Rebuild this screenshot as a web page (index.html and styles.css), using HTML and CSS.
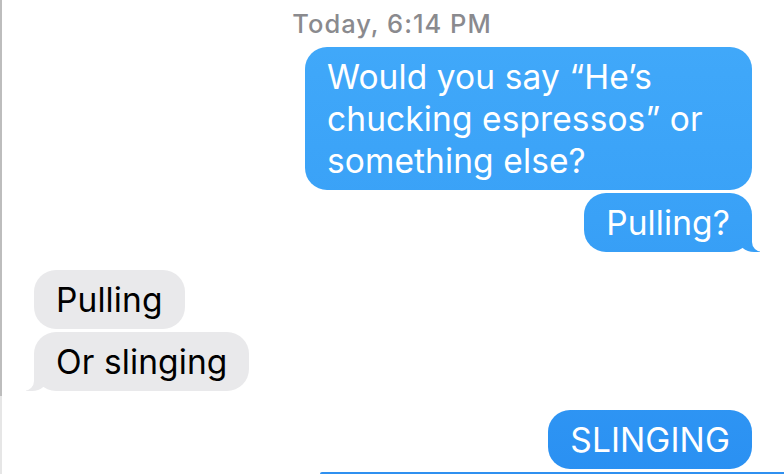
FILE: index.html
```html
<!DOCTYPE html>
<html lang="en">
<head>
<meta charset="utf-8">
<title>Messages</title>
<link rel="stylesheet" href="styles.css">
</head>
<body>
<div class="screen">
  <div class="edge"></div>
  <main class="thread">
    <div class="stamp">Today, 6:14 PM</div>
    <div class="group sent">
      <div class="bubble blue wide">Would you say “He’s chucking espressos” or something else?</div>
      <div class="bubble blue tail">Pulling?</div>
    </div>
    <div class="group recv">
      <div class="bubble gray">Pulling</div>
      <div class="bubble gray tail">Or slinging</div>
    </div>
    <div class="group sent after-recv">
      <div class="bubble blue">SLINGING</div>
    </div>
    <div class="next"></div>
  </main>
</div>
</body>
</html>
```
FILE: styles.css
```css
html, body {
  margin: 0;
  padding: 0;
  background: #fff;
}
.screen {
  width: 784px;
  height: 474px;
  overflow: hidden;
  display: flex;
  font-family: Inter, "Liberation Sans", sans-serif;
}
.edge {
  width: 2px;
  flex: none;
  background: linear-gradient(to bottom, #bdbdbd 0, #bdbdbd 396px, #e6e6e6 396px, #e6e6e6 100%);
}
.thread {
  flex: 1;
  display: flex;
  flex-direction: column;
}
.stamp {
  height: 47px;
  flex: none;
  box-sizing: border-box;
  padding-top: 8px;
  text-align: center;
  color: #8a8a8e;
  font-size: 25.5px;
  font-weight: 500;
  line-height: 31px;
  letter-spacing: 1px;
  padding-right: 2px;
}
.group {
  display: flex;
  flex-direction: column;
  gap: 3px;
  flex: none;
}
.sent {
  align-items: flex-end;
  padding-right: 32px;
}
.recv {
  align-items: flex-start;
  padding-left: 32px;
  margin-top: 18px;
}
.after-recv {
  margin-top: 19px;
}
.bubble {
  position: relative;
  box-sizing: border-box;
  font-size: 33.5px;
  line-height: 42px;
  padding: 9px 22px 8px 22px;
  border-radius: 22px;
  letter-spacing: 0.1px;
}
.wide {
  max-width: 447px;
  width: 447px;
  padding-bottom: 8px;
}
.blue {
  color: #fff;
  background: linear-gradient(to bottom, #42aafa 0, #39a1f7 220px, #2a90f2 474px);
  background-attachment: fixed;
}
.gray {
  color: #000;
  background: #e9e9eb;
}
.tail::before,
.tail::after {
  content: "";
  position: absolute;
  bottom: 0;
  height: 22px;
}
.blue.tail::before {
  right: -8px;
  width: 22px;
  background: inherit;
  border-bottom-left-radius: 16px 14px;
}
.blue.tail::after {
  right: -12px;
  width: 12px;
  background: #fff;
  border-bottom-left-radius: 10px;
}
.gray.tail::before {
  left: -8px;
  width: 22px;
  background: #e9e9eb;
  border-bottom-right-radius: 16px 14px;
}
.gray.tail::after {
  left: -12px;
  width: 12px;
  background: #fff;
  border-bottom-right-radius: 10px;
}
.next {
  flex: none;
  margin-top: 3px;
  margin-left: 318px;
  height: 2px;
  background: #2f90f0;
  border-top-left-radius: 2px;
}
```
